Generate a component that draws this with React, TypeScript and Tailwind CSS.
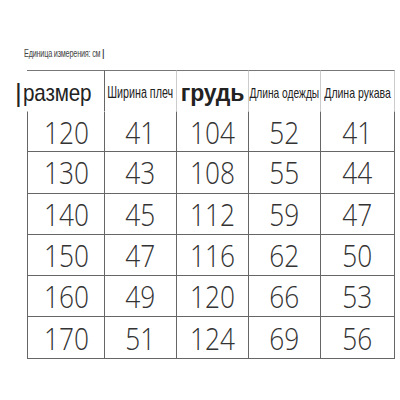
const headers = [
  { label: "размер", cls: "text-[24px] scale-x-[0.86] origin-left tracking-[-0.2px]" },
  { label: "Ширина плеч", cls: "text-[16px] scale-x-[0.67] whitespace-nowrap" },
  { label: "грудь", cls: "text-[23px] font-bold tracking-[-0.2px]" },
  { label: "Длина одежды", cls: "text-[15px] scale-x-[0.68] whitespace-nowrap" },
  { label: "Длина рукава", cls: "text-[15px] scale-x-[0.7] whitespace-nowrap" },
];

const rows = [
  [120, 41, 104, 52, 41],
  [130, 43, 108, 55, 44],
  [140, 45, 112, 59, 47],
  [150, 47, 116, 62, 50],
  [160, 49, 120, 66, 53],
  [170, 51, 124, 69, 56],
];

export default function App() {
  return (
    <div className="w-[400px] h-[400px] bg-white overflow-hidden">
      <div className="pt-[45px] pl-[24px] h-[70px]">
        <div
          className="text-[11px] text-[#444] scale-x-[0.66] origin-left whitespace-nowrap tracking-[-0.3px]"
          style={{ fontFamily: '"Liberation Sans", Arial, sans-serif' }}
        >
          Единица измерения: см <span className="font-bold text-[#333]">|</span>
        </div>
      </div>
      <div
        className="ml-[27px] w-[368px] grid grid-cols-[78px_72px_72px_72px_74px]"
        style={{ fontFamily: '"Liberation Sans", Arial, sans-serif' }}
      >
        {headers.map((h, i) => (
          <div
            key={h.label}
            className={
              "h-[41px] border-t border-[#777] flex items-center pt-[4px] text-[#222] " +
              (i === 0 ? "justify-start border-r border-r-[#666]" : "justify-center border-r border-r-[#ccc]")
            }
          >
            {i === 0 ? (
              <div className="flex items-center -ml-[12px]">
                <span className="text-[26px] text-[#222] mr-[1px] font-light">|</span>
                <span className={h.cls}>{h.label}</span>
              </div>
            ) : (
              <span className={h.cls}>{h.label}</span>
            )}
          </div>
        ))}
        {rows.map((r, ri) =>
          r.map((v, ci) => (
            <div
              key={ri + "-" + ci}
              className={
                "h-[41.3px] flex items-center justify-center border-r border-b border-[#666] text-[32px] font-light text-[#333] " +
                (ci === 0 ? "border-l " : "") +
                (ri === 0 ? "border-t border-t-transparent" : "")
              }
              style={{ fontFamily: '"Open Sans", "Noto Sans", sans-serif' }}
            >
              <span className="scale-x-[0.82]">{v}</span>
            </div>
          ))
        )}
      </div>
    </div>
  );
}
